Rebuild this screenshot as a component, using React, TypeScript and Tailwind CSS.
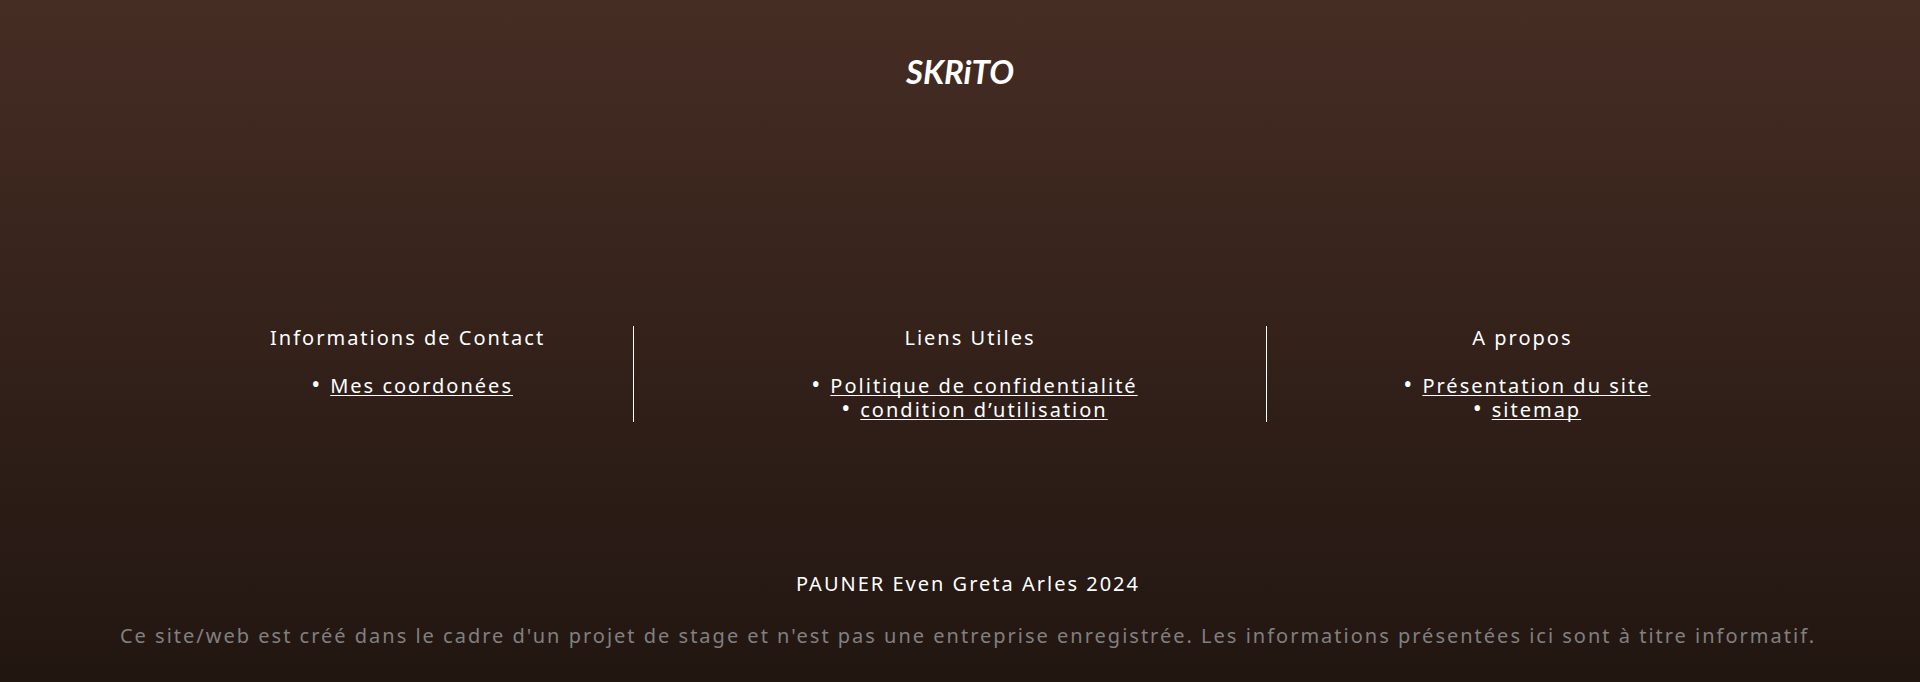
type FooterLink = { label: string; href: string };
type Section = { title: string; links: FooterLink[]; className: string };

const sections: Section[] = [
  {
    title: "Informations de Contact",
    links: [{ label: "Mes coordonées", href: "#contact" }],
    className: "grow-[450] border-r",
  },
  {
    title: "Liens Utiles",
    links: [
      { label: "Politique de confidentialité", href: "#confidentialite" },
      { label: "condition d’utilisation", href: "#conditions" },
    ],
    className: "grow-[592] border-r",
  },
  {
    title: "A propos",
    links: [
      { label: "Présentation du site", href: "#presentation" },
      { label: "sitemap", href: "#sitemap" },
    ],
    className: "grow-[430]",
  },
];

function FooterSection({ title, links, className }: Section) {
  return (
    <section className={`basis-0 border-white ${className}`}>
      <h2 className="mb-6">{title}</h2>
      <ul>
        {links.map((link) => (
          <li
            key={link.label}
            className="before:inline-block before:w-7 before:pr-2 before:text-right before:text-[24px] before:leading-5 before:content-['•']"
          >
            <a
              href={link.href}
              className="underline decoration-1 underline-offset-2 [text-decoration-skip-ink:none]"
            >
              {link.label}
            </a>
          </li>
        ))}
      </ul>
    </section>
  );
}

export default function App() {
  return (
    <footer className="flex min-h-screen flex-col items-center bg-linear-to-b from-[#462d24] to-[#221611] pt-12 pb-[34px] text-center font-['Noto_Sans',sans-serif] text-[20px] leading-6 tracking-[2px] text-white">
      <a
        href="#accueil"
        className="font-['Lato',sans-serif] text-[33px] leading-[46px] font-bold tracking-normal italic"
      >
        SKRiTO
      </a>
      <nav className="mt-58 flex w-[81%] gap-10">
        {sections.map((section) => (
          <FooterSection key={section.title} {...section} />
        ))}
      </nav>
      <div className="mt-auto flex flex-col gap-7 pl-4">
        <p>PAUNER Even Greta Arles 2024</p>
        <p className="text-[#808080]">
          Ce site/web est créé dans le cadre d'un projet de stage et n'est pas une entreprise enregistrée. Les informations présentées ici sont à titre informatif.
        </p>
      </div>
    </footer>
  );
}
